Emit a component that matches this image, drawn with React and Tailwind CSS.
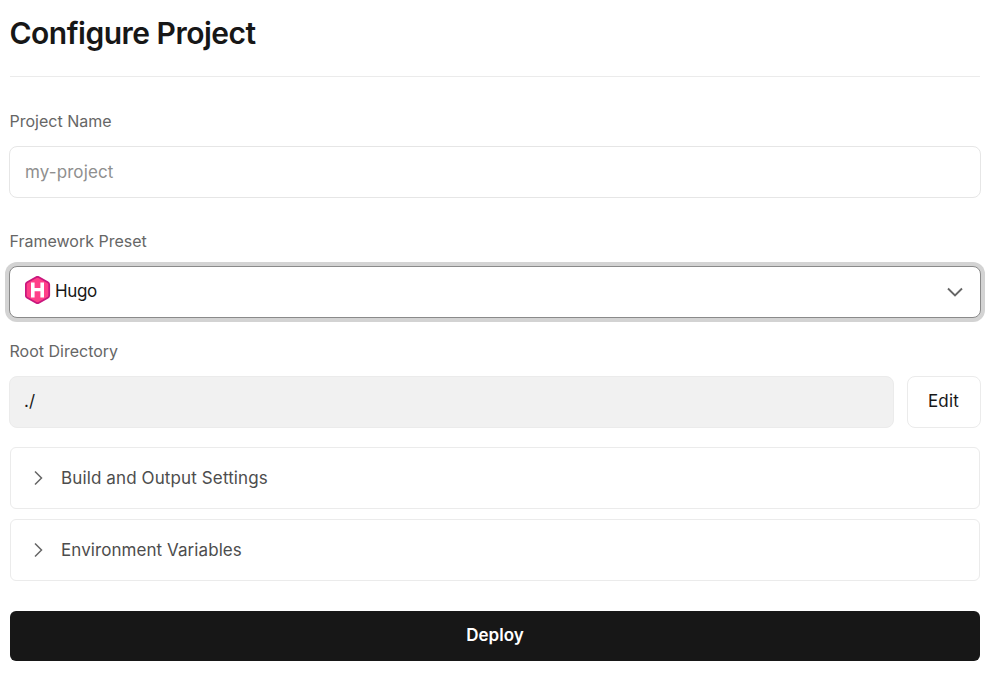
import React from "react";

function HugoLogo() {
  return (
    <svg width="26" height="28" viewBox="0 0 26 28" className="-mt-1 shrink-0" aria-hidden="true">
      <path
        d="M11.1 1.2a2.8 2.8 0 0 1 2.8 0l8.9 5a2.8 2.8 0 0 1 1.4 2.4v10.8a2.8 2.8 0 0 1-1.4 2.4l-8.9 5a2.8 2.8 0 0 1-2.8 0l-8.9-5a2.8 2.8 0 0 1-1.4-2.4V8.6a2.8 2.8 0 0 1 1.4-2.4z"
        fill="#ff4088"
        stroke="#c9177e"
        strokeWidth="1.8"
      />
      <path d="M6 6.6h3.6v5.5h5.8V6.6H19v14.8h-3.6v-6.2H9.6v6.2H6z" fill="#fff" />
    </svg>
  );
}

function Label({ children, className }) {
  return <div className={`text-base leading-6 text-[#666] ${className}`}>{children}</div>;
}

function Section({ title, titleClass }) {
  return (
    <button className="mx-px flex h-[62px] items-center rounded-md border border-[#ebebeb] bg-white pl-[22px] text-left">
      <svg width="12" height="16" viewBox="0 0 12 16" fill="none" stroke="#666" strokeWidth="1.5" aria-hidden="true">
        <path d="M2 1.5 8.5 8 2 14.5" />
      </svg>
      <span className={`ml-4 text-[17px] leading-6 text-[#4d4d4d] ${titleClass}`}>{title}</span>
    </button>
  );
}

export default function App() {
  return (
    <main className="flex h-[676px] w-[1001px] flex-col bg-white pl-[9px] pr-5 font-['Inter',sans-serif] text-[#171717]">
      <header className="mx-px h-[77px] border-b border-[#ebebeb] pt-[13px]">
        <h1 className="-ml-[0.5px] text-[30px] leading-10 font-semibold tracking-[-0.5px]">Configure Project</h1>
      </header>

      <Label className="mt-8 ml-[0.5px]">Project Name</Label>
      <input
        className="mt-[13px] h-[52px] w-full shrink-0 rounded-lg border border-[#e6e6e6] px-[15px] text-[17px] tracking-[0.1px] outline-none placeholder:text-[#8f8f8f]"
        placeholder="my-project"
      />

      <Label className="mt-[31px] ml-[0.5px]">Framework Preset</Label>
      <button className="mt-[13px] flex h-[52px] shrink-0 items-center rounded-lg border border-[#8a8a8a] bg-white pr-[17px] pl-[15px] shadow-[0_0_0_4px_#d3d3d3]">
        <HugoLogo />
        <span className="ml-1 pb-0.5 text-[17px] leading-6 tracking-[-0.4px]">Hugo</span>
        <svg width="16" height="16" viewBox="0 0 16 16" fill="none" stroke="#666" strokeWidth="1.9" className="ml-auto" aria-hidden="true">
          <path d="M1 4.5 8 11.5 15 4.5" />
        </svg>
      </button>

      <Label className="mt-[21px] ml-[0.5px]">Root Directory</Label>
      <div className="mt-[13px] flex h-[52px] shrink-0 gap-[13px]">
        <div className="flex flex-1 items-center rounded-lg border border-[#ebebeb] bg-[#f1f1f1] px-[14px] text-[17px]">./</div>
        <button className="w-[74px] rounded-lg border border-[#ebebeb] bg-white pr-px text-[17px] tracking-[0.2px]">Edit</button>
      </div>

      <div className="mt-[19px] flex flex-col gap-[10px]">
        <Section title="Build and Output Settings" titleClass="tracking-[0.12px]" />
        <Section title="Environment Variables" titleClass="tracking-[0.07px]" />
      </div>

      <button className="mx-px mt-[30px] h-[50px] shrink-0 rounded-md bg-[#171717] pb-px text-[17px] font-semibold text-white">
        Deploy
      </button>
    </main>
  );
}
